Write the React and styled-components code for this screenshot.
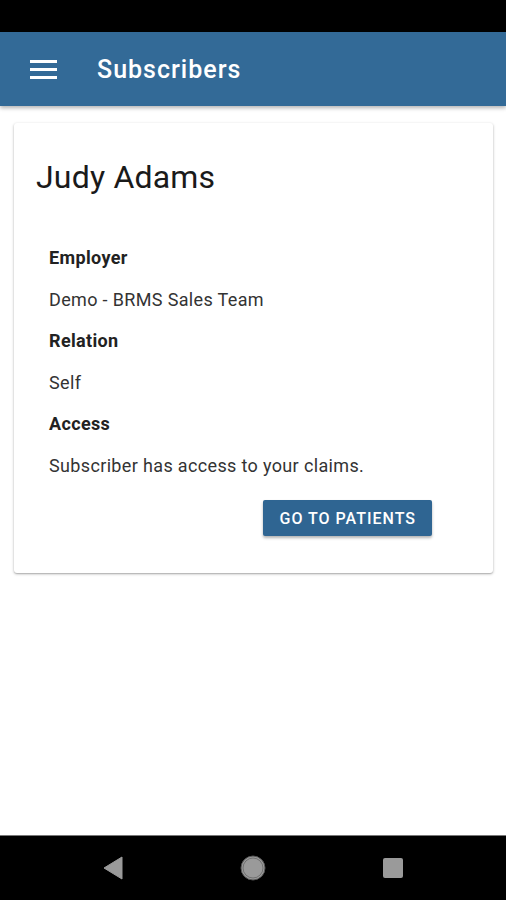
import React from 'react';
import styled, { createGlobalStyle } from 'styled-components';

const GlobalStyle = createGlobalStyle`
  html, body {
    margin: 0;
    padding: 0;
    background: #fff;
  }
  body {
    font-family: Roboto, 'Noto Sans', Arial, sans-serif;
  }
`;

// Screen frame
const Screen = styled.div`
  width: 506px;
  height: 900px;
  display: flex;
  flex-direction: column;
  background: #fff;
  overflow: hidden;
`;

const StatusBar = styled.div`
  height: 32px;
  background: #000;
  flex-shrink: 0;
`;

const AppBar = styled.header`
  height: 74px;
  background: #336a97;
  display: flex;
  align-items: center;
  padding-left: 30px;
  gap: 40px;
  box-shadow: 0 2px 4px rgba(0, 0, 0, 0.3);
  flex-shrink: 0;
  position: relative;
  z-index: 1;
`;

const MenuButton = styled.div`
  width: 27px;
  height: 19px;
  display: flex;
  flex-direction: column;
  justify-content: space-between;
`;

const MenuLine = styled.span`
  display: block;
  height: 3px;
  background: #fff;
`;

const AppTitle = styled.h1`
  margin: 0;
  color: #fff;
  font-size: 25px;
  font-weight: 500;
  letter-spacing: 1px;
`;

const Content = styled.main`
  flex: 1;
  padding: 17px 13px 0 14px;
`;

const Card = styled.section`
  background: #fff;
  border-radius: 3px;
  box-shadow: 0 1px 3px rgba(0, 0, 0, 0.28), 0 1px 1px rgba(0, 0, 0, 0.12);
  padding: 36px 22px 37px 22px;
`;

const Name = styled.h2`
  margin: 0 0 53px 0;
  font-size: 32px;
  font-weight: 400;
  letter-spacing: 0.2px;
  color: #1a1a1a;
  line-height: 36px;
`;

const Details = styled.dl`
  margin: 0;
  padding: 0 13px;
`;

const Label = styled.dt`
  font-size: 18px;
  font-weight: 700;
  letter-spacing: 0.35px;
  color: #222;
  line-height: 20px;
  margin-bottom: 21.5px;
`;

const Value = styled.dd`
  margin: 0 0 21.5px 0;
  font-size: 18px;
  letter-spacing: 0.35px;
  color: #333;
  line-height: 20px;
`;

const Actions = styled.div`
  display: flex;
  justify-content: flex-end;
  padding-right: 39px;
  margin-top: 24.5px;
`;

const Button = styled.button`
  height: 36px;
  padding: 0 16px 0 17px;
  border: none;
  border-radius: 2px;
  background: #2f6592;
  color: #fff;
  font-family: Roboto, Arial, sans-serif;
  font-size: 16px;
  font-weight: 500;
  letter-spacing: 1px;
  box-shadow: 0 2px 3px rgba(0, 0, 0, 0.3);
  cursor: pointer;
`;

const NavBar = styled.nav`
  height: 64px;
  background: #000;
  display: flex;
  align-items: center;
  justify-content: center;
  gap: 114px;
  border-top: 1px solid #777;
  flex-shrink: 0;
`;

const NavIcon = styled.svg`
  width: 26px;
  height: 26px;
`;

const fields = [
  { label: 'Employer', value: 'Demo - BRMS Sales Team' },
  { label: 'Relation', value: 'Self' },
  { label: 'Access', value: 'Subscriber has access to your claims.' },
];

const App = () => {
  return (
    <Screen>
      <GlobalStyle />
      <StatusBar />
      <AppBar>
        <MenuButton>
          <MenuLine />
          <MenuLine />
          <MenuLine />
        </MenuButton>
        <AppTitle>Subscribers</AppTitle>
      </AppBar>

      <Content>
        <Card>
          <Name>Judy Adams</Name>
          <Details>
            {fields.map((f) => (
              <React.Fragment key={f.label}>
                <Label>{f.label}</Label>
                <Value>{f.value}</Value>
              </React.Fragment>
            ))}
          </Details>
          <Actions>
            <Button>GO TO PATIENTS</Button>
          </Actions>
        </Card>
      </Content>

      <NavBar>
        <NavIcon viewBox="0 0 26 26">
          <path d="M22 2 L22 24 L4 13 Z" fill="#9a9a9a" strokeLinejoin="round" stroke="#9a9a9a" strokeWidth="1" />
        </NavIcon>
        <NavIcon viewBox="0 0 26 26">
          <circle cx="13" cy="13" r="12" fill="#9a9a9a" stroke="#555" strokeWidth="1" />
          <circle cx="13" cy="13" r="10" fill="none" stroke="#666" strokeWidth="0.8" />
        </NavIcon>
        <NavIcon viewBox="0 0 26 26">
          <rect x="3" y="3" width="20" height="20" rx="2" fill="#9a9a9a" />
        </NavIcon>
      </NavBar>
    </Screen>
  );
};

export default App;
